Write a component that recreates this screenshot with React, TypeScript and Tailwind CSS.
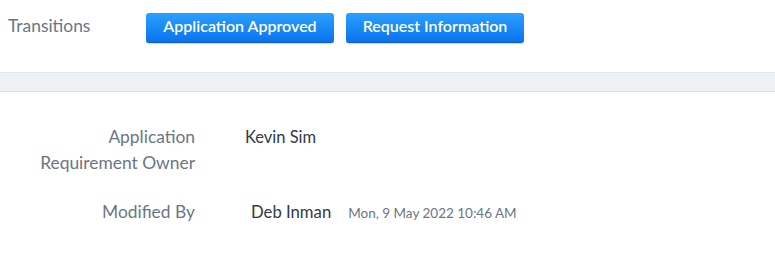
const font = { fontFamily: "Lato, 'Noto Sans', sans-serif" };

function TransitionButton({ label, width }: { label: string; width: string }) {
  return (
    <button
      className={`h-[30px] ${width} rounded-[3px] border-b border-[#0a5fc9] bg-gradient-to-b from-[#2ba0ff] to-[#0b72f0] pb-[3px] text-[16px] font-semibold text-white shadow-[0_1px_1px_rgba(0,0,0,0.15)]`}
    >
      {label}
    </button>
  );
}

export default function App() {
  return (
    <div className="h-[258px] w-[775px] overflow-hidden bg-white" style={font}>
      {/* Transitions bar */}
      <div className="flex h-[72px] items-start pl-2 pt-[13px]">
        <div className="w-[138px] pt-[1px] text-[17.4px] leading-[24px] text-[#6b7585]">Transitions</div>
        <div className="flex gap-[12px]">
          <TransitionButton label="Application Approved" width="w-[188px]" />
          <TransitionButton label="Request Information" width="w-[178px]" />
        </div>
      </div>

      {/* divider band */}
      <div className="h-[20px] border-y border-t-[#e1e6ec] border-b-[#d9e4ee] bg-[#eef1f4]" />

      {/* details */}
      <div className="pt-[32px]">
        <div className="flex">
          <div className="w-[195px] text-right text-[17.4px] leading-[26px] text-[#6b7585]">
            Application
            <br />
            Requirement Owner
          </div>
          <div className="ml-[50px] text-[16.5px] leading-[26px] text-[#333a44]">Kevin Sim</div>
        </div>
        <div className="mt-[23px] flex items-baseline">
          <div className="w-[195px] text-right text-[17.4px] leading-[26px] text-[#6b7585]">Modified By</div>
          <div className="ml-[56px] text-[16.7px] leading-[26px] text-[#333a44]">Deb Inman</div>
          <div className="ml-[17px] text-[13.5px] text-[#6b7585]">Mon, 9 May 2022 10:46 AM</div>
        </div>
      </div>
    </div>
  );
}
